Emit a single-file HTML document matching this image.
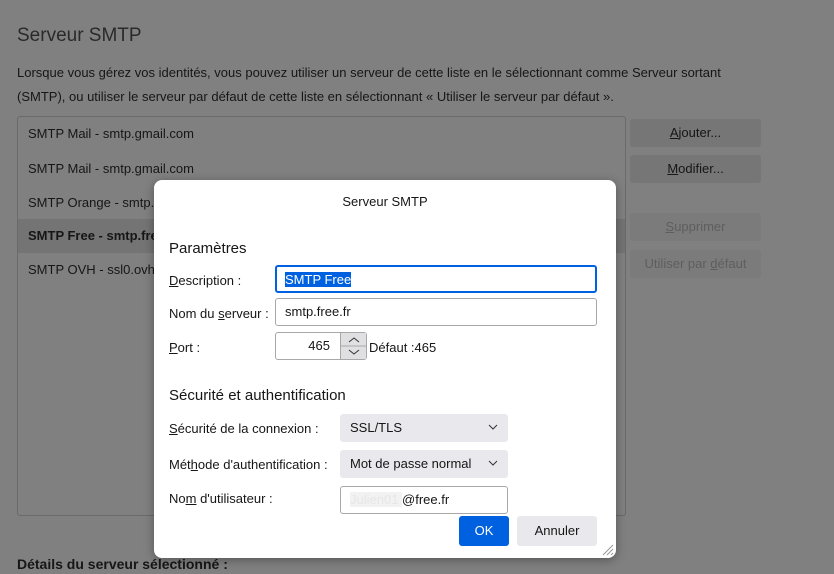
<!DOCTYPE html>
<html><head><meta charset="utf-8"><style>
*{box-sizing:border-box;margin:0;padding:0}
body{width:834px;height:574px;overflow:hidden;background:#808080;font-family:"Liberation Sans",sans-serif;color:#161616;position:relative;font-size:13px}
.a{position:absolute;white-space:nowrap}
.bg h1{font-weight:normal;font-size:19px;color:#2a2a2a}
.list{position:absolute;left:17px;top:116px;width:609px;height:400px;border:1px solid #6a6a6a;border-radius:3px}
.row{position:absolute;left:0;width:607px;height:34px;line-height:34px;padding-left:10px;font-size:13px}
.btn{position:absolute;left:630px;width:131px;height:28px;background:#767676;border-radius:3px;text-align:center;line-height:28px;font-size:13px}
.dis{color:#5e5e5e;background:#7b7b7b}
.dlg{position:absolute;left:154px;top:180px;width:462px;height:378px;background:#fff;border-radius:8px;box-shadow:0 2px 10px rgba(0,0,0,.35)}
.dlg .a{font-size:13px}
.inp{position:absolute;border:1px solid #a8a8a8;border-radius:3px;background:#fff;height:28px;line-height:26px;padding-left:9px;font-size:13px}
.sel{position:absolute;background:#e9e9ed;border-radius:3px;height:28px;line-height:28px;padding-left:10px;font-size:13px}
.sel svg{position:absolute;right:10px;top:10px}
u{text-decoration:underline}
</style></head><body>
<div class="bg">
<h1 class="a" style="left:17px;top:25px">Serveur SMTP</h1>
<div class="a" style="left:17px;top:65px">Lorsque vous gérez vos identités, vous pouvez utiliser un serveur de cette liste en le sélectionnant comme Serveur sortant</div>
<div class="a" style="left:17px;top:89px">(SMTP), ou utiliser le serveur par défaut de cette liste en sélectionnant « Utiliser le serveur par défaut ».</div>
<div class="list">
<div class="row" style="top:0">SMTP Mail - smtp.gmail.com</div>
<div class="row" style="top:35px">SMTP Mail - smtp.gmail.com</div>
<div class="row" style="top:69px">SMTP Orange - smtp.orange.fr</div>
<div class="row" style="top:102px;background:#747474;font-weight:bold">SMTP Free - smtp.free.fr</div>
<div class="row" style="top:136px">SMTP OVH - ssl0.ovh.net</div>
</div>
<div class="btn" style="top:119px"><u>A</u>jouter...</div>
<div class="btn" style="top:155px"><u>M</u>odifier...</div>
<div class="btn dis" style="top:213px"><u>S</u>upprimer</div>
<div class="btn dis" style="top:250px">Utiliser par <u>d</u>éfaut</div>
<div class="a" style="left:17px;top:556px;font-weight:bold;font-size:14px">Détails du serveur sélectionné :</div>
</div>
<div class="dlg">
<div class="a" style="left:0;width:462px;text-align:center;top:14px">Serveur SMTP</div>
<div class="a" style="left:15px;top:60px;font-size:15px">Paramètres</div>
<div class="a" style="left:15px;top:93px"><u>D</u>escription :</div>
<div class="inp" style="left:121px;top:85px;width:322px;border:2px solid #0061e0;padding-left:8px"><span style="background:#0061e0;color:#fff">SMTP Free</span></div>
<div class="a" style="left:15px;top:126px">Nom du <u>s</u>erveur :</div>
<div class="inp" style="left:121px;top:118px;width:322px">smtp.free.fr</div>
<div class="a" style="left:15px;top:160px"><u>P</u>ort :</div>
<div class="inp" style="left:121px;top:152px;width:92px;text-align:right;padding-right:36px">465</div>
<div style="position:absolute;left:186px;top:153px;width:26px;height:26px;background:#e0e0e3;border-left:1px solid #a8a8a8">
<svg width="26" height="26"><line x1="0" y1="13" x2="26" y2="13" stroke="#a8a8a8"/><path d="M8 9l5-4 5 4M8 17l5 4 5-4" fill="none" stroke="#333" stroke-width="1"/></svg></div>
<div class="a" style="left:215px;top:160px">Défaut :465</div>
<div class="a" style="left:15px;top:207px;font-size:15px">Sécurité et authentification</div>
<div class="a" style="left:15px;top:241px"><u>S</u>écurité de la connexion :</div>
<div class="sel" style="left:186px;top:234px;width:168px">SSL/TLS<svg width="10" height="7"><path d="M1 1l4 4 4-4" fill="none" stroke="#333"/></svg></div>
<div class="a" style="left:15px;top:277px">Mét<u>h</u>ode d'authentification :</div>
<div class="sel" style="left:186px;top:270px;width:168px">Mot de passe normal<svg width="10" height="7"><path d="M1 1l4 4 4-4" fill="none" stroke="#333"/></svg></div>
<div class="a" style="left:15px;top:311px">No<u>m</u> d'utilisateur :</div>
<div class="inp" style="left:186px;top:306px;width:168px"><span style="color:#e6e6e6;background:#f2f2f2">Julien01 </span>@free.fr</div>
<div style="position:absolute;left:305px;top:336px;width:50px;height:30px;background:#0061e0;border-radius:3px;color:#fff;text-align:center;line-height:30px;font-size:13px">OK</div>
<div style="position:absolute;left:363px;top:336px;width:80px;height:30px;background:#e9e9ed;border-radius:3px;text-align:center;line-height:30px;font-size:13px">Annuler</div>
<svg style="position:absolute;right:2px;bottom:2px" width="14" height="14"><path d="M13 3L3 13M13 7L7 13M13 11L11 13" stroke="#999"/></svg>
</div>
</body></html>
